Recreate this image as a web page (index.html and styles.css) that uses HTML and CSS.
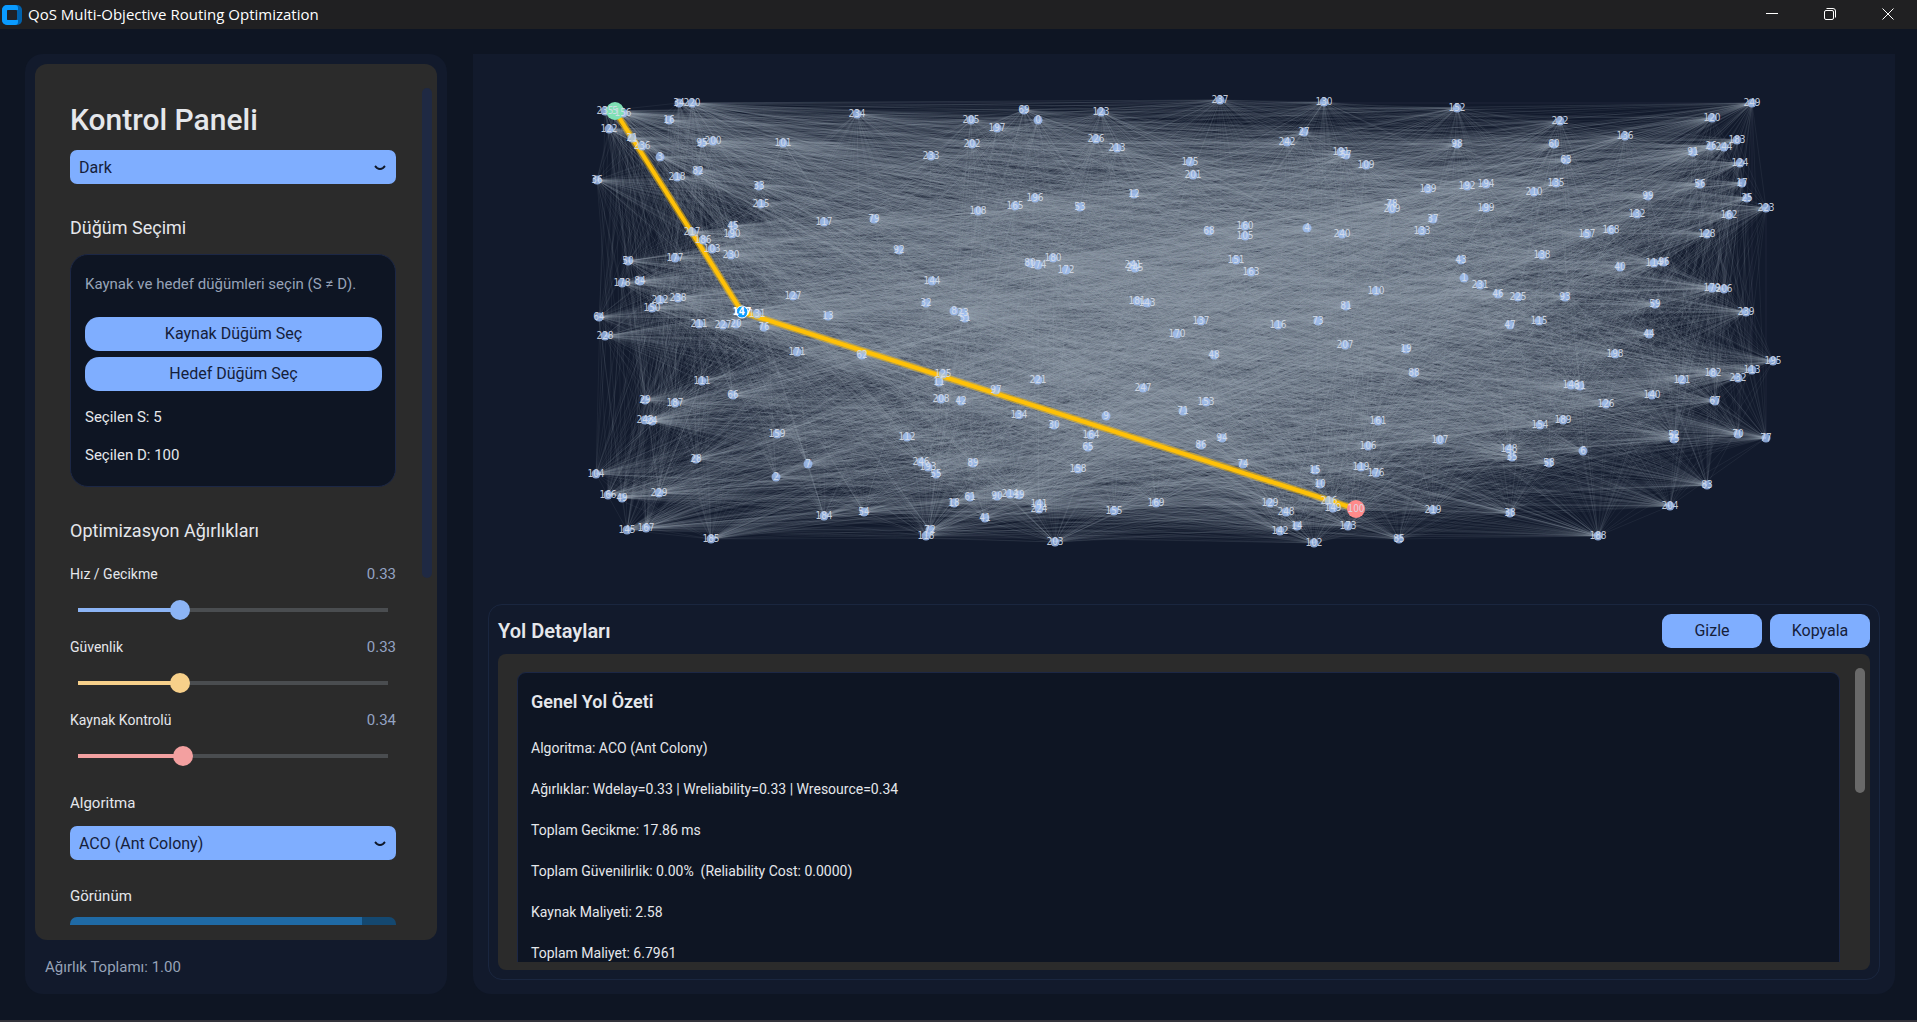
FILE: index.html
```html
<!DOCTYPE html>
<html lang="tr">
  <head>
    <meta charset="UTF-8" />
    <meta name="viewport" content="width=device-width, initial-scale=1.0" />
    <title>QoS Multi-Objective Routing Optimization</title>
    <link rel="stylesheet" href="styles.css">
  </head>
  <body>
    <header class="titlebar">
      <svg class="logo" viewBox="0 0 20 20" width="20" height="20" aria-hidden="true">
        <rect width="20" height="20" rx="5" fill="#0062ad" />
        <path d="M5 0H13A3 3 0 0 1 16 3V5H5V15H16V17A3 3 0 0 1 13 20H5A5 5 0 0 1 0 15V5A5 5 0 0 1 5 0Z" fill="#0a9bff" />
        <rect x="5" y="5" width="10" height="10" rx="1" fill="#1f2228" />
      </svg>
      <span class="window-title">QoS Multi-Objective Routing Optimization</span>
      <div class="window-buttons">
        <button type="button" aria-label="Simge durumuna küçült">
          <svg viewBox="0 0 12 12" width="12" height="12"><path d="M0 5.5H12" /></svg>
        </button>
        <button type="button" aria-label="Önceki boyut">
          <svg viewBox="0 0 12 12" width="12" height="12">
            <rect x="0.5" y="2.5" width="9" height="9" rx="1.5" />
            <path d="M2.5 0.5H9A2.5 2.5 0 0 1 11.5 3V9.5" />
          </svg>
        </button>
        <button type="button" aria-label="Kapat">
          <svg viewBox="0 0 12 12" width="12" height="12"><path d="M0.5 0.5L11.5 11.5M11.5 0.5L0.5 11.5" /></svg>
        </button>
      </div>
    </header>

    <div class="app">
      <aside class="sidebar">
        <div class="scroll-frame">
          <div class="scroll-view">
            <h1>Kontrol Paneli</h1>
            <div class="select-box">
              <select aria-label="Tema">
                <option>Dark</option>
                <option>Light</option>
              </select>
              <svg viewBox="0 0 12 6" width="12" height="6"><path d="M1 1L3 3Q6 5 9 3L11 1" /></svg>
            </div>

            <h2>Düğüm Seçimi</h2>
            <div class="node-card">
              <p class="hint">Kaynak ve hedef düğümleri seçin (S ≠ D).</p>
              <button type="button" class="btn pill">Kaynak Düğüm Seç</button>
              <button type="button" class="btn pill">Hedef Düğüm Seç</button>
              <p class="picked">Seçilen S: 5</p>
              <p class="picked">Seçilen D: 100</p>
            </div>

            <h2 class="weights-title">Optimizasyon Ağırlıkları</h2>
            <div class="weight delay">
              <label for="wDelay">Hız / Gecikme</label>
              <output for="wDelay">0.33</output>
              <input type="range" id="wDelay" min="0" max="1" step="0.01" value="0.33" style="--value: 0.33" />
            </div>
            <div class="weight reliability">
              <label for="wReliability">Güvenlik</label>
              <output for="wReliability">0.33</output>
              <input type="range" id="wReliability" min="0" max="1" step="0.01" value="0.33" style="--value: 0.33" />
            </div>
            <div class="weight resource">
              <label for="wResource">Kaynak Kontrolü</label>
              <output for="wResource">0.34</output>
              <input type="range" id="wResource" min="0" max="1" step="0.01" value="0.34" style="--value: 0.34" />
            </div>

            <label class="field-label" for="algorithm">Algoritma</label>
            <div class="select-box">
              <select id="algorithm">
                <option>ACO (Ant Colony)</option>
              </select>
              <svg viewBox="0 0 12 6" width="12" height="6"><path d="M1 1L3 3Q6 5 9 3L11 1" /></svg>
            </div>

            <label class="field-label view-label" for="viewMode">Görünüm</label>
            <div class="select-box view-box">
              <select id="viewMode"></select>
            </div>
          </div>
          <div class="scrollbar"></div>
        </div>
        <p class="total">Ağırlık Toplamı: 1.00</p>
      </aside>

      <main class="content">
        <svg class="graph" id="graph" viewBox="473 54 1422 550" role="img" aria-label="Ağ topolojisi"></svg>

        <section class="details">
          <div class="details-head">
            <h2>Yol Detayları</h2>
            <button type="button" class="btn">Gizle</button>
            <button type="button" class="btn">Kopyala</button>
          </div>
          <div class="details-frame">
            <div class="details-view">
              <div class="summary">
                <h3>Genel Yol Özeti</h3>
                <p>Algoritma: ACO (Ant Colony)</p>
                <p>Ağırlıklar: Wdelay=0.33 | Wreliability=0.33 | Wresource=0.34</p>
                <p>Toplam Gecikme: 17.86 ms</p>
                <p>Toplam Güvenilirlik: 0.00%&nbsp; (Reliability Cost: 0.0000)</p>
                <p>Kaynak Maliyeti: 2.58</p>
                <p>Toplam Maliyet: 6.7961</p>
              </div>
            </div>
            <div class="scrollbar"></div>
          </div>
        </section>
      </main>
    </div>

    <script src="graph.js"></script>
  </body>
</html>
```
FILE: styles.css
```css
* {
  box-sizing: border-box;
}
body {
  margin: 0;
  height: 100vh;
  display: flex;
  flex-direction: column;
  background: #0e1523;
  color: #e5e7eb;
  font-family: Roboto, sans-serif;
  font-size: 15px;
  overflow: hidden;
  border-bottom: 2px solid #33323a;
}
h1, h2, h3, p {
  margin: 0;
}
button, select, input {
  font-family: inherit;
}

/* title bar */
.titlebar {
  height: 29px;
  flex: none;
  display: flex;
  align-items: center;
  padding-left: 2px;
  background: #202022;
}
.window-title {
  flex: 1;
  margin-left: 6px;
  color: #fff;
  font: 15px/20px "Open Sans", sans-serif;
  padding-bottom: 1px;
}
.window-buttons {
  display: flex;
}
.window-buttons button {
  width: 58px;
  height: 28px;
  padding: 0 0 2px;
  border: 0;
  background: none;
}
.window-buttons svg {
  display: block;
  margin: auto;
  fill: none;
  stroke: #fff;
}

.app {
  flex: 1;
  min-height: 0;
  display: flex;
  gap: 26px;
  padding: 25px 22px 26px 25px;
}

/* left panel */
.sidebar {
  width: 422px;
  flex: none;
  display: flex;
  flex-direction: column;
  padding: 10px 10px 0;
  border-radius: 18px;
  background: #121a2c;
}
.scroll-frame {
  flex: 1;
  min-height: 0;
  display: flex;
  padding: 24px 5px 15px 35px;
  border-radius: 12px;
  background: #2b2b2b;
}
.scroll-view {
  flex: 1;
  overflow: hidden;
  padding-right: 26px;
}
.scroll-frame .scrollbar {
  width: 10px;
  height: 490px;
  border-radius: 5px;
  background: #1f2943;
}
h1 {
  margin-top: 14px;
  font-size: 30px;
  line-height: 36px;
  font-weight: 500;
}
h2 {
  font-size: 18px;
  line-height: 24px;
  font-weight: 400;
}
.scroll-view h2 {
  margin-top: 32px;
}
.select-box {
  position: relative;
  height: 34px;
}
h1 + .select-box {
  margin-top: 12px;
}
.select-box select {
  appearance: none;
  width: 100%;
  height: 34px;
  padding: 0 9px;
  border: 0;
  border-radius: 7px;
  background: #7faeff;
  color: #15203a;
  font-size: 16px;
}
.select-box svg {
  position: absolute;
  right: 10px;
  top: 15px;
  fill: none;
  stroke: #0f1728;
  stroke-width: 2;
  pointer-events: none;
}
.node-card {
  display: flex;
  flex-direction: column;
  margin-top: 14px;
  padding: 17px 13px 19px 14px;
  border: 1px solid #1c2745;
  border-radius: 18px;
  background: #0e1523;
}
.hint {
  margin-bottom: 21px;
  line-height: 24px;
  color: #97a3b8;
}
.btn {
  width: 100px;
  height: 34px;
  padding: 0 0 2px;
  border: 0;
  border-radius: 9px;
  background: #7faeff;
  color: #15203a;
  font-size: 16px;
}
.btn.pill {
  width: 100%;
  border-radius: 14px;
}
.pill + .pill {
  margin-top: 6px;
}
.picked {
  margin-top: 14px;
  line-height: 24px;
}
.scroll-view .weights-title {
  margin-bottom: 18px;
}

/* weight sliders */
.weight {
  --c: #8cb4f5;
  display: grid;
  grid-template-columns: 1fr auto;
  grid-template-rows: 26px 20px;
  row-gap: 13px;
  height: 73px;
}
.weight.reliability {
  --c: #f7d08a;
}
.weight.resource {
  --c: #f3a0a0;
}
.weight label {
  font-size: 14px;
  line-height: 26px;
}
.weight output {
  line-height: 26px;
  color: #94a3c3;
}
.weight input {
  grid-column: 1 / 3;
  appearance: none;
  height: 20px;
  width: calc(100% + 4px);
  margin: 0 -2px;
  background:
    linear-gradient(var(--c), var(--c)) 10px center / calc((100% - 20px) * var(--value)) 4px no-repeat,
    linear-gradient(#4a4d50, #4a4d50) center / calc(100% - 20px) 4px no-repeat;
}
.weight input::-webkit-slider-thumb {
  appearance: none;
  width: 20px;
  height: 20px;
  border-radius: 50%;
  background: var(--c);
}
.weight input::-moz-range-thumb {
  width: 20px;
  height: 20px;
  border: 0;
  border-radius: 50%;
  background: var(--c);
}
.field-label {
  display: block;
  margin: 11px 0;
  line-height: 24px;
}
.view-label {
  margin: 24px 0 9px;
}
.view-box select {
  background: linear-gradient(to left, #144870 34px, #1f6aa5 34px);
}
.total {
  padding: 15px 10px;
  line-height: 24px;
  color: #97a3b8;
}

/* right side */
.content {
  flex: 1;
  min-width: 0;
  display: flex;
  flex-direction: column;
  padding: 0 15px 14px;
  border-radius: 0 0 18px 18px;
  background: #121a2c;
}
.graph {
  flex: 1;
  min-height: 0;
  margin: 0 -15px;
}
.edge {
  stroke: #a2abbd;
  stroke-opacity: 0.11;
  stroke-width: 0.8;
}
.route {
  fill: none;
  stroke: #ffc107;
  stroke-width: 4;
}
.route-glow {
  fill: none;
  stroke: #ffc107;
  stroke-opacity: 0.5;
  stroke-width: 7;
}
.node {
  fill: #a3c3f7;
  fill-opacity: 0.8;
}
.node.source {
  fill: #7fe0b5;
  fill-opacity: 1;
}
.node.target {
  fill: #ff8a8a;
  fill-opacity: 1;
}
.node.hop {
  fill: #0a9bff;
  fill-opacity: 1;
  stroke: #fff;
  stroke-width: 1;
}
.graph text {
  fill: #d8dfea;
  fill-opacity: 0.9;
  font: 10px "DejaVu Sans Condensed", "DejaVu Sans", sans-serif;
  text-anchor: middle;
}
.graph .hop-label {
  fill: #fff;
  fill-opacity: 1;
  font-weight: bold;
}
.details {
  flex: none;
  padding: 9px;
  border: 1px solid #1a263f;
  border-radius: 14px;
}
.details-head {
  display: flex;
  align-items: center;
  gap: 8px;
  margin-bottom: 6px;
}
.details-head h2 {
  flex: 1;
  font-size: 20px;
  font-weight: 600;
}
.details-frame {
  display: flex;
  height: 316px;
  padding: 14px 5px 8px 19px;
  border-radius: 8px;
  background: #2b2b2b;
}
.details-view {
  flex: 1;
  overflow: hidden;
  padding: 4px 15px 0 0;
}
.details-frame .scrollbar {
  width: 10px;
  height: 125px;
  border-radius: 5px;
  background: #696969;
}
.summary {
  padding: 17px 13px;
  border: 1px solid #1c2745;
  border-radius: 9px;
  background: #0e1523;
}
.summary h3 {
  margin-bottom: 14px;
  font-size: 18px;
  line-height: 24px;
  font-weight: 600;
}
.summary p {
  font-size: 14px;
  line-height: 41px;
}
```
FILE: graph.js
```js
// id, x, y
const nodes = [
  [235, 605, 111], [156, 623, 113], [122, 609, 129], [21, 632, 138], [236, 642, 146],
  [3, 660, 157], [34, 679, 103], [220, 692, 103], [16, 669, 120], [95, 702, 143],
  [200, 713, 141], [101, 783, 143], [234, 857, 114], [36, 597, 180], [218, 677, 177],
  [82, 698, 171], [33, 759, 186], [215, 761, 204], [117, 824, 222], [79, 874, 219],
  [92, 899, 250], [45, 733, 226], [190, 732, 234], [230, 731, 255], [217, 692, 232],
  [186, 703, 240], [103, 712, 249], [177, 675, 258], [50, 628, 261], [178, 622, 283],
  [84, 640, 281], [212, 660, 300], [238, 678, 298], [150, 652, 308], [127, 793, 296],
  [131, 757, 314], [13, 828, 316], [64, 599, 317], [228, 605, 336], [211, 699, 324],
  [227, 723, 325], [20, 736, 324], [76, 764, 327], [171, 797, 352], [62, 862, 355],
  [111, 702, 381], [66, 733, 395], [29, 645, 400], [187, 675, 403], [243, 645, 420],
  [24, 652, 421], [159, 777, 434], [28, 696, 459], [7, 808, 464], [2, 776, 477],
  [104, 596, 474], [166, 608, 495], [49, 622, 498], [229, 659, 493], [145, 627, 530],
  [167, 646, 528], [185, 711, 539], [184, 824, 516], [54, 864, 512], [112, 907, 437],
  [237, 1220, 100], [130, 1324, 102], [69, 1024, 110], [0, 1038, 120], [123, 1101, 112],
  [205, 971, 120], [197, 997, 128], [202, 972, 144], [233, 931, 156], [226, 1096, 139],
  [213, 1117, 148], [27, 1304, 132], [242, 1287, 142], [175, 1190, 162], [201, 1193, 175],
  [196, 1035, 198], [165, 1015, 206], [108, 978, 211], [53, 1080, 207], [12, 1134, 194],
  [68, 1209, 231], [160, 1245, 226], [105, 1245, 236], [4, 1307, 228], [80, 1030, 263],
  [174, 1038, 265], [180, 1053, 258], [172, 1066, 270], [241, 1133, 265], [245, 1135, 268],
  [151, 1236, 260], [163, 1251, 272], [144, 932, 281], [32, 926, 303], [181, 1137, 301],
  [143, 1147, 303], [8, 954, 311], [23, 963, 313], [51, 965, 318], [137, 1201, 321],
  [116, 1278, 325], [73, 1318, 321], [170, 1177, 334], [48, 1214, 355], [125, 943, 374],
  [11, 939, 382], [208, 941, 399], [42, 961, 401], [97, 996, 390], [221, 1038, 380],
  [247, 1143, 388], [153, 1206, 402], [71, 1183, 411], [134, 1019, 415], [30, 1054, 425],
  [9, 1106, 416], [164, 1091, 435], [65, 1088, 447], [94, 1222, 438], [86, 1201, 445],
  [246, 921, 462], [193, 928, 467], [55, 936, 474], [89, 973, 463], [158, 1078, 469],
  [74, 1243, 464], [15, 1315, 470], [10, 1320, 484], [18, 954, 503], [61, 970, 497],
  [90, 997, 496], [214, 1010, 494], [39, 1019, 495], [141, 1039, 504], [224, 1039, 509],
  [41, 985, 518], [155, 1114, 511], [169, 1156, 503], [129, 1270, 503], [248, 1286, 512],
  [216, 1329, 501], [149, 1333, 508], [14, 1297, 526], [142, 1280, 531], [102, 1314, 543],
  [203, 1055, 542], [72, 930, 530], [118, 926, 536], [152, 1457, 108], [222, 1560, 121],
  [249, 1752, 103], [120, 1712, 118], [136, 1625, 136], [98, 1457, 144], [60, 1554, 144],
  [63, 1566, 160], [183, 1737, 140], [26, 1711, 146], [244, 1724, 147], [91, 1693, 152],
  [124, 1740, 163], [191, 1341, 152], [57, 1346, 155], [109, 1366, 165], [139, 1428, 189],
  [192, 1467, 186], [194, 1486, 184], [135, 1556, 183], [210, 1534, 192], [56, 1700, 184],
  [17, 1742, 183], [25, 1747, 198], [99, 1648, 196], [223, 1766, 208], [162, 1729, 215],
  [132, 1637, 214], [78, 1392, 204], [209, 1392, 209], [199, 1486, 208], [37, 1433, 219],
  [133, 1422, 231], [240, 1342, 234], [157, 1587, 234], [168, 1611, 230], [128, 1707, 234],
  [138, 1542, 255], [43, 1461, 260], [40, 1620, 267], [114, 1654, 263], [96, 1664, 262],
  [1, 1464, 278], [231, 1480, 285], [46, 1498, 294], [225, 1518, 297], [93, 1565, 297],
  [110, 1376, 291], [179, 1712, 288], [206, 1724, 289], [59, 1655, 304], [81, 1346, 306],
  [239, 1746, 312], [47, 1510, 325], [115, 1539, 321], [44, 1649, 334], [207, 1345, 345],
  [19, 1406, 349], [88, 1414, 373], [198, 1615, 354], [195, 1773, 361], [113, 1752, 370],
  [182, 1713, 373], [232, 1738, 378], [121, 1682, 380], [146, 1571, 385], [31, 1580, 386],
  [140, 1652, 395], [126, 1606, 404], [67, 1715, 401], [161, 1378, 421], [154, 1540, 425],
  [189, 1563, 420], [52, 1674, 435], [75, 1674, 439], [70, 1738, 434], [77, 1766, 438],
  [107, 1440, 440], [106, 1368, 446], [148, 1509, 449], [35, 1512, 457], [6, 1583, 451],
  [58, 1549, 463], [119, 1361, 467], [176, 1376, 473], [83, 1707, 485], [204, 1670, 506],
  [219, 1433, 510], [38, 1510, 513], [173, 1348, 526], [85, 1399, 539], [188, 1598, 536],
  [5, 615, 111], [147, 742, 312], [100, 1356, 509]
];
const route = [5, 147, 100];
const edgeProbability = 0.4;

// small seeded generator, so the topology is the same on every load
let seed = 42;
function random() {
  seed = (seed * 1664525 + 1013904223) % 4294967296;
  return seed / 4294967296;
}

function nodeClass(id) {
  if (id === route[0]) return "node source";
  if (id === route[route.length - 1]) return "node target";
  return route.includes(id) ? "node hop" : "node";
}

function drawGraph() {
  let svg = "";
  for (let i = 0; i < nodes.length; i++) {
    for (let j = i + 1; j < nodes.length; j++) {
      if (random() < edgeProbability) {
        svg += `<line class="edge" x1="${nodes[i][1]}" y1="${nodes[i][2]}" x2="${nodes[j][1]}" y2="${nodes[j][2]}"/>`;
      }
    }
  }

  const points = route
    .map((id) => nodes.find((n) => n[0] === id))
    .map((n) => n[1] + "," + n[2])
    .join(" ");
  svg += `<polyline class="route-glow" points="${points}"/>`;
  svg += `<polyline class="route" points="${points}"/>`;

  for (const [id, x, y] of nodes) {
    const isEnd = id === route[0] || id === route[route.length - 1];
    const r = isEnd ? 9 : route.includes(id) ? 6 : 4.5;
    svg += `<circle class="${nodeClass(id)}" cx="${x}" cy="${y}" r="${r}"/>`;
  }
  for (const [id, x, y] of nodes) {
    const hop = nodeClass(id) === "node hop" ? ' class="hop-label"' : "";
    svg += `<text${hop} x="${x}" y="${y + 3}">${id}</text>`;
  }
  document.getElementById("graph").innerHTML = svg;
}

drawGraph();
```
